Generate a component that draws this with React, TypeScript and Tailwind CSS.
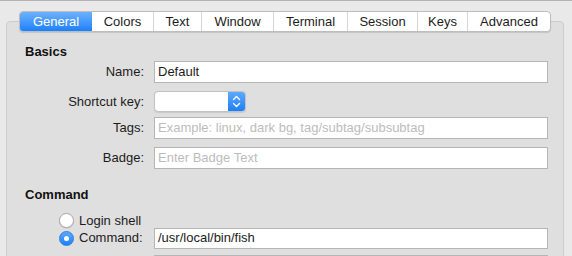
import React from 'react';

const tabs = [
  { label: 'General', w: 'w-[72px]' },
  { label: 'Colors', w: 'w-[61px]' },
  { label: 'Text', w: 'w-[48px]' },
  { label: 'Window', w: 'w-[72px]' },
  { label: 'Terminal', w: 'w-[74px]' },
  { label: 'Session', w: 'w-[70px]' },
  { label: 'Keys', w: 'w-[50px]' },
  { label: 'Advanced', w: 'w-[83px]' },
];

function Radio({ checked }: { checked?: boolean }) {
  if (checked) {
    return (
      <span className="w-[15px] h-[15px] rounded-full bg-gradient-to-b from-[#5aa9fb] to-[#1b7ff5] border border-[#2c7fe6] flex items-center justify-center flex-shrink-0">
        <span className="w-[5px] h-[5px] rounded-full bg-white" />
      </span>
    );
  }
  return <span className="w-[15px] h-[15px] rounded-full bg-white border border-[#a9a9a9] shadow-[0_0.5px_1px_rgba(0,0,0,0.15)] flex-shrink-0" />;
}

function Field({ value, placeholder, h = 'h-[22px]' }: { value?: string; placeholder?: string; h?: string }) {
  return (
    <div className={`w-[394px] ${h} bg-white border border-[#b5b5b5] px-[3px] flex items-center text-[13px]`}>
      {value ? <span className="text-[#1c1c1c]">{value}</span> : <span className="text-[#bcbcbc]">{placeholder}</span>}
    </div>
  );
}

function Row({ label, children, className }: { label: string; children: React.ReactNode; className?: string }) {
  return (
    <div className={`flex items-center ${className ?? ''}`}>
      <span className="w-[137px] text-right text-[13px] text-[#1c1c1c]">{label}</span>
      <div className="ml-[10px]">{children}</div>
    </div>
  );
}

export default function App() {
  return (
    <div
      className="w-[572px] h-[256px] overflow-hidden bg-[#e9e9e9] border-t border-[#b3b3b3] pt-[10px]"
      style={{ fontFamily: '"Liberation Sans", Arial, sans-serif' }}
    >
      <div className="relative z-10 ml-[19px] flex w-max h-[21px] bg-white border border-[#bdbdbd] rounded-[4px] shadow-[0_1px_1px_rgba(0,0,0,0.12)] overflow-hidden">
        {tabs.map((t, i) => (
          <div
            key={t.label}
            className={`${t.w} flex items-center justify-center text-[13px] ${
              i === 0
                ? 'bg-gradient-to-b from-[#6bb1fb] to-[#1980fb] text-white'
                : 'text-[#1c1c1c]'
            } ${i > 1 ? 'border-l border-[#d6d6d6]' : ''}`}
          >
            {t.label}
          </div>
        ))}
      </div>

      <div className="-mt-[11px] ml-[6px] w-[558px] h-[260px] bg-[#dfdfdf] border border-[#cdcdcd] rounded-[4px] pt-[20px]">
        <div className="pl-[18px] h-[17px] text-[13px] font-bold text-[#111]">Basics</div>

        <Row label="Name:" className="mt-[2px]">
          <Field value="Default" />
        </Row>

        <Row label="Shortcut key:" className="mt-[8px]">
          <div className="w-[92px] h-[21px] bg-white border border-[#c2c2c2] rounded-[4px] flex justify-end overflow-hidden shadow-[0_0.5px_1px_rgba(0,0,0,0.1)]">
            <div className="w-[17px] h-full bg-gradient-to-b from-[#5ba9fb] to-[#1a7ff8] flex items-center justify-center">
              <svg width="9" height="13" viewBox="0 0 9 13" fill="none" stroke="white" strokeWidth="1.4" strokeLinecap="round" strokeLinejoin="round">
                <path d="M1.5 4.5 L4.5 1.5 L7.5 4.5" />
                <path d="M1.5 8.5 L4.5 11.5 L7.5 8.5" />
              </svg>
            </div>
          </div>
        </Row>

        <Row label="Tags:" className="mt-[5px]">
          <Field placeholder="Example: linux, dark bg, tag/subtag/subsubtag" />
        </Row>

        <Row label="Badge:" className="mt-[8px]">
          <Field placeholder="Enter Badge Text" />
        </Row>

        <div className="pl-[18px] mt-[16px] h-[17px] text-[13px] font-bold text-[#111]">Command</div>

        <div className="pl-[52px] mt-[9px] flex items-center gap-[5px] text-[13px] text-[#1c1c1c]">
          <Radio />
          <span>Login shell</span>
        </div>

        <div className="pl-[52px] -mt-[3px] flex items-center">
          <div className="w-[85px] flex items-center gap-[5px] text-[13px] text-[#1c1c1c]">
            <Radio checked />
            <span>Command:</span>
          </div>
          <div className="ml-[10px]">
            <Field value="/usr/local/bin/fish" h="h-[21px]" />
          </div>
        </div>

        <div className="ml-[147px] mt-[6px]">
          <Field />
        </div>
      </div>
    </div>
  );
}
